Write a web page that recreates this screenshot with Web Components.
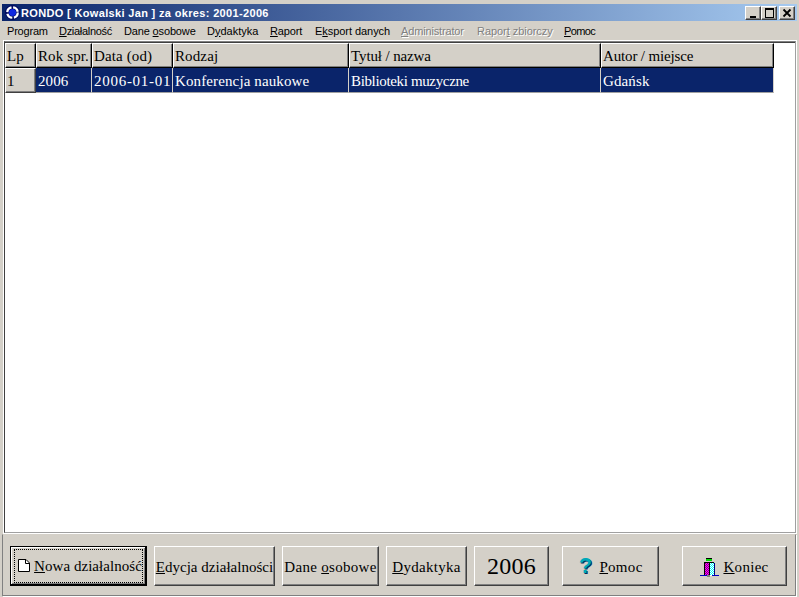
<!DOCTYPE html>
<html lang="pl">
<head>
<meta charset="utf-8">
<title>RONDO</title>
<style>
  html, body { margin: 0; height: 100%; overflow: hidden; background: #d4d0c8; }
</style>
</head>
<body>
<app-window>
  <title-bar slot="title">RONDO [ Kowalski Jan ] za okres: 2001-2006</title-bar>
  <menu-bar slot="menu">
    <menu-item style="width:52px;--ls:-.2px">Program</menu-item>
    <menu-item style="width:65px;--ls:-.3px"><u>D</u>ziałalność</menu-item>
    <menu-item style="width:83px">Dane <u>o</u>sobowe</menu-item>
    <menu-item style="width:63px;--ls:0">D<u>y</u>daktyka</menu-item>
    <menu-item style="width:45px"><u>R</u>aport</menu-item>
    <menu-item style="width:86px;--ls:-.05px">E<u>k</u>sport danych</menu-item>
    <menu-item style="width:76px" disabled><u>A</u>dministrator</menu-item>
    <menu-item style="width:87px;--ls:-.05px" disabled>Rapor<u>t</u> zbiorczy</menu-item>
    <menu-item style="width:40px;--ls:-.6px"><u>P</u>omoc</menu-item>
  </menu-bar>
  <data-grid slot="main">
    <grid-cell head>Lp</grid-cell>
    <grid-cell head>Rok spr.</grid-cell>
    <grid-cell head>Data (od)</grid-cell>
    <grid-cell head>Rodzaj</grid-cell>
    <grid-cell head style="--ls:-.12px">Tytuł / nazwa</grid-cell>
    <grid-cell head style="--ls:-.15px">Autor / miejsce</grid-cell>
    <grid-cell fixed>1</grid-cell>
    <grid-cell>2006</grid-cell>
    <grid-cell style="--ls:.72px">2006-01-01</grid-cell>
    <grid-cell>Konferencja naukowe</grid-cell>
    <grid-cell style="--ls:-.35px">Biblioteki muzyczne</grid-cell>
    <grid-cell>Gdańsk</grid-cell>
  </data-grid>
  <button-bar slot="buttons">
    <push-button style="width:137px;--ls:.05px;--gap:4px;--pl:4px" default>
      <svg slot="icon" width="12" height="13" viewBox="0 0 12 13"><path d="M.5 .5H8L11.5 4V12.5H.5Z" fill="#fff" stroke="#000"/><path d="M7.5 .5V4.5H11.5" fill="none" stroke="#000"/></svg>
      <u>N</u>owa działalność
    </push-button>
    <push-button style="width:121px;--ls:.02px"><u>E</u>dycja działalności</push-button>
    <push-button style="width:97px">Dane <u>o</u>sobowe</push-button>
    <push-button style="width:81px"><u>D</u>ydaktyka</push-button>
    <push-button style="width:75px;font-size:24px;--pt:0px">2006</push-button>
    <push-button style="width:97px;margin-left:6px">
      <help-mark slot="icon"></help-mark>
      <u>P</u>omoc
    </push-button>
    <push-button style="width:105px;margin-left:16px">
      <svg slot="icon" style="margin-top:3px" width="19" height="19" viewBox="0 0 19 19" shape-rendering="crispEdges">
        <defs>
          <pattern id="mg" width="2" height="2" patternUnits="userSpaceOnUse"><rect width="2" height="2" fill="#f0f"/><rect width="1" height="1" fill="#808"/><rect x="1" y="1" width="1" height="1" fill="#808"/></pattern>
          <pattern id="cy" width="2" height="2" patternUnits="userSpaceOnUse"><rect width="2" height="2" fill="#fff"/><rect width="1" height="1" fill="#0ff"/><rect x="1" y="1" width="1" height="1" fill="#0ff"/></pattern>
        </defs>
        <rect x="6" y="0" width="6" height="1" fill="#000"/>
        <rect x="6" y="1" width="6" height="2" fill="#00e000"/>
        <rect x="4" y="4" width="10" height="1" fill="#000"/>
        <rect x="4" y="5" width="1" height="12" fill="#000"/>
        <rect x="5" y="5" width="4" height="12" fill="url(#mg)"/>
        <rect x="9" y="5" width="1" height="12" fill="#000"/>
        <rect x="10" y="5" width="4" height="12" fill="url(#cy)"/>
        <rect x="14" y="5" width="1" height="12" fill="#000080"/>
        <rect x="0" y="17" width="7" height="1" fill="#0000c0"/>
        <rect x="7" y="17" width="3" height="2" fill="#808080"/>
        <rect x="10" y="17" width="2" height="1" fill="#fff"/>
        <rect x="12" y="17" width="7" height="1" fill="#0000c0"/>
      </svg>
      <u>K</u>oniec
    </push-button>
  </button-bar>
</app-window>

<script>
class AppWindow extends HTMLElement {
  connectedCallback() {
    this.attachShadow({ mode: 'open' });
    this.shadowRoot.innerHTML = `
      <style>
        :host { display: flex; flex-direction: column; box-sizing: border-box; width: 799px; height: 597px; padding-top: 4px; background: #d4d0c8; }
        .main { flex: 1; min-height: 0; display: flex; margin: 0 2px 0 3px; }
      </style>
      <slot name="title"></slot>
      <slot name="menu"></slot>
      <div class="main"><slot name="main"></slot></div>
      <slot name="buttons"></slot>
    `;
  }
}
customElements.define('app-window', AppWindow);

class TitleBar extends HTMLElement {
  connectedCallback() {
    this.attachShadow({ mode: 'open' });
    this.shadowRoot.innerHTML = `
      <style>
        :host { display: flex; align-items: center; box-sizing: border-box; height: 17px; margin: 0 2px; padding-left: 3px; color: #fff;
          font: bold 11px "Liberation Sans", Arial, sans-serif; background: linear-gradient(90deg, #0a246a, #a6caf0); }
        svg { display: block; margin-right: 1px; flex: none; }
        .text { flex: 1; white-space: nowrap; letter-spacing: .34px; }
        .ctl { display: flex; margin-right: 2px; }
        .btn { box-sizing: border-box; width: 16px; height: 14px; background: #d4d0c8; border: 1px solid; border-color: #fff #404040 #404040 #fff; box-shadow: inset -1px -1px 0 #808080; position: relative; }
        .close { margin-left: 2px; }
        .btn svg { position: absolute; left: 2px; top: 1px; margin: 0; }
      </style>
      <svg width="15" height="15" viewBox="0 0 16 16">
        <circle cx="8" cy="8" r="8" fill="#000a60"/>
        <circle cx="8" cy="8" r="5.6" fill="none" stroke="#fff" stroke-width="2.4" stroke-dasharray="7 1.8"/>
        <circle cx="8" cy="8" r="3.8" fill="#1028e0"/>
      </svg>
      <span class="text"><slot></slot></span>
      <div class="ctl">
        <div class="btn"><svg width="10" height="10" viewBox="0 0 10 10" shape-rendering="crispEdges"><rect x="2" y="8" width="6" height="2"/></svg></div>
        <div class="btn"><svg width="11" height="10" viewBox="0 0 11 10" shape-rendering="crispEdges"><path d="M1 0h9v10H1zM2 2v7h7V2z" fill-rule="evenodd"/></svg></div>
        <div class="btn close"><svg width="10" height="10" viewBox="0 0 10 10"><path d="M1.5 1.5L8.5 8.5M8.5 1.5L1.5 8.5" stroke="#000" stroke-width="1.8"/></svg></div>
      </div>
    `;
  }
}
customElements.define('title-bar', TitleBar);

class MenuBar extends HTMLElement {
  connectedCallback() {
    this.attachShadow({ mode: 'open' });
    this.shadowRoot.innerHTML = `
      <style>
        :host { display: flex; align-items: center; height: 19px; padding-left: 7px; font: 11px "Liberation Sans", Arial, sans-serif; color: #000; }
      </style>
      <slot></slot>
    `;
  }
}
customElements.define('menu-bar', MenuBar);

class MenuItem extends HTMLElement {
  connectedCallback() {
    this.attachShadow({ mode: 'open' });
    this.shadowRoot.innerHTML = `
      <style>
        :host { display: block; flex: none; white-space: nowrap; letter-spacing: var(--ls, -.15px); }
        :host([disabled]) { color: #808080; text-shadow: 1px 1px 0 #fff; }
      </style>
      <slot></slot>
    `;
  }
}
customElements.define('menu-item', MenuItem);

class DataGrid extends HTMLElement {
  connectedCallback() {
    this.attachShadow({ mode: 'open' });
    this.shadowRoot.innerHTML = `
      <style>
        :host { display: block; flex: 1; box-sizing: border-box; background: #fff; border: 1px solid #fff; }
        .well { box-sizing: border-box; height: 100%; padding-top: 1px; background: #fff; border: 1px solid; border-color: #808080 #a0a0a0 #a0a0a0 #404040; box-shadow: inset 0 1px 0 #404040; }
        .rows { display: grid; width: 769px; grid-template-columns: 31px 56px 81px 176px 252px 173px; grid-auto-rows: 25px; }
      </style>
      <div class="well"><div class="rows"><slot></slot></div></div>
    `;
  }
}
customElements.define('data-grid', DataGrid);

class GridCell extends HTMLElement {
  connectedCallback() {
    this.attachShadow({ mode: 'open' });
    this.shadowRoot.innerHTML = `
      <style>
        :host { display: flex; align-items: center; box-sizing: border-box; min-width: 0; padding: 2px 0 0 2px; overflow: hidden; white-space: nowrap;
          font: 15px "Liberation Serif", "Times New Roman", serif; letter-spacing: var(--ls, .12px);
          background: #0a246a; color: #fff; border-right: 1px solid #d4d0c8; border-bottom: 1px solid #a0a0a0; }
        :host([head]), :host([fixed]) { background: #d4d0c8; color: #000; border: 1px solid; border-color: #fff #000 #000 #fff; padding-left: 1px; box-shadow: inset -1px -1px 0 #808080; }
        :host([fixed]) { border-color: #fff #404040 #404040 #fff; }
      </style>
      <slot></slot>
    `;
  }
}
customElements.define('grid-cell', GridCell);

class ButtonBar extends HTMLElement {
  connectedCallback() {
    this.attachShadow({ mode: 'open' });
    this.shadowRoot.innerHTML = `
      <style>
        :host { display: flex; gap: 7px; box-sizing: border-box; height: 62px; margin: 0 3px 1px 2px; padding: 11px 0 0 7px; border: 1px solid #808080; box-shadow: 1px 1px 0 #fff; border-top-color: #d4d0c8; }
      </style>
      <slot></slot>
    `;
  }
}
customElements.define('button-bar', ButtonBar);

class PushButton extends HTMLElement {
  connectedCallback() {
    this.attachShadow({ mode: 'open' });
    this.shadowRoot.innerHTML = `
      <style>
        :host { display: block; flex: none; box-sizing: border-box; height: 40px; font: 15px "Liberation Serif", "Times New Roman", serif; color: #000; }
        .face { box-sizing: border-box; height: 100%; display: flex; align-items: center; justify-content: center; gap: var(--gap, 4px); padding-left: var(--pl, 0); white-space: nowrap;
          background: #d4d0c8; border: 1px solid; border-color: #fff #404040 #404040 #fff; box-shadow: inset -1px -1px 0 #808080; }
        :host([default]) .face { border-color: #000; border-width: 1px 2px 2px 1px; box-shadow: inset 1px 1px 0 #fff, inset -1px -1px 0 #808080; position: relative; }
        :host([default]) .face::after { content: ""; position: absolute; inset: 2px 2px 1px 3px; border: 1px dotted #000; }
        .label { letter-spacing: var(--ls, .3px); padding-top: var(--pt, 2px); }
      </style>
      <div class="face"><slot name="icon"></slot><span class="label"><slot></slot></span></div>
    `;
  }
}
customElements.define('push-button', PushButton);

class HelpMark extends HTMLElement {
  connectedCallback() {
    this.attachShadow({ mode: 'open' });
    this.shadowRoot.innerHTML = `
      <style>
        :host { display: block; width: 14px; margin-right: 3px; text-align: center; font: bold 22px/20px "Liberation Sans", Arial, sans-serif; color: #00a8b8; text-shadow: 1px 1px 0 #003060; }
      </style>?
    `;
  }
}
customElements.define('help-mark', HelpMark);
</script>
</body>
</html>
